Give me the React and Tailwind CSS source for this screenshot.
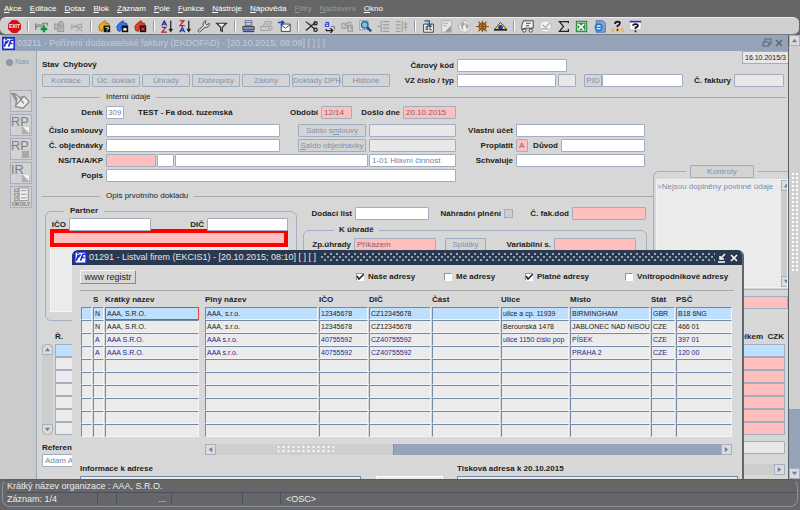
import clsx from 'clsx'
import { twMerge } from 'tailwind-merge'

const MENU = ['Akce', 'Editace', 'Dotaz', 'Blok', 'Záznam', 'Pole', 'Funkce', 'Nástroje', 'Nápověda', 'Filtry', 'Nastavení', 'Okno']

const TOOLS = [
  ['exit'],
  ['add', 'duplicate', 'remove'],
  ['queryEdit', 'queryRun', 'queryCancel'],
  ['sortAsc', 'sortDesc', 'wrench', 'filter'],
  ['print', 'printMail', 'mail'],
  ['cut', 'copy', 'paste', 'search', 'listIn', 'listOut'],
  ['attach', 'note', 'globe', 'helm', 'eye'],
  ['truck', 'clock', 'sum', 'excel', 'web', 'helpBoxes', 'help'],
]

const TABS = ['Kontace', 'Úč. doklad', 'Úhrady', 'Dobropisy', 'Zálohy', 'Doklady DPH', 'Historie']

const COLUMNS = ['', 'S', 'Krátký název', null, 'Plný název', 'IČO', 'DIČ', 'Část', 'Ulice', 'Místo', 'Stát', 'PSČ']

const FIRMS = [
  ['', 'N', 'AAA, S.R.O.', null, 'AAA, s.r.o.', '12345678', 'CZ12345678', '', 'ulice a cp. 11939', 'BIRMINGHAM', 'GBR', 'B18 6NG'],
  ['', 'N', 'AAA, S.R.O.', null, 'AAA, s.r.o.', '12345678', 'CZ12345678', '', 'Berounská 1478', 'JABLONEC NAD NISOU', 'CZE', '466 01'],
  ['', 'A', 'AAA S.R.O.', null, 'AAA s.r.o.', '40755592', 'CZ40755592', '', 'ulice 1150 číslo pop', 'PÍSEK', 'CZE', '397 01'],
  ['', 'A', 'AAA S.R.O.', null, 'AAA s.r.o.', '40755592', 'CZ40755592', '', '', 'PRAHA 2', 'CZE', '120 00'],
  ...Array.from({ length: 6 }, () => ['', '', '', null, '', '', '', '', '', '', '', '']),
]

const FILTERS = [
  { label: 'Naše adresy', checked: true, width: 'w-[88px]' },
  { label: 'Mé adresy', checked: false, width: 'w-[81px]' },
  { label: 'Platné adresy', checked: true, width: 'w-[100px]' },
  { label: 'Vnitropodnikové adresy', checked: false, width: 'w-[109px]' },
]

const glyphs = {
  exit: (
    <>
      <path d="M5 0h6l5 5v6l-5 5H5l-5-5V5z" fill="#d3101c" />
      <text x="8" y="10" fontSize="6" fontWeight="bold" textAnchor="middle" fill="#fff">EXIT</text>
    </>
  ),
  add: (
    <>
      <path d="M1 4v8M1 8h6l3-4h5v3" stroke="#6e7572" fill="none" strokeWidth="1.500" />
      <path d="M2 5h8l4-2-4 6H4z" fill="#9ba59f" />
      <path d="M11 7v8M7 11h8" stroke="#12943d" strokeWidth="3" />
    </>
  ),
  duplicate: <path d="M2 5h6V2h3l2 3v9H6v-3H2zM6 11V7h6M8 9h3M8 11h3" stroke="#9a9a9a" fill="#c0c0c0" strokeWidth="1.500" />,
  remove: <path d="M1 4v8M1 8l12-3v4H3M5 6l9 8M14 7l-8 7" stroke="#a6a6a6" fill="none" strokeWidth="1.500" />,
  queryEdit: (
    <>
      <path d="M1 8l2-3 5-4 2 1-1 2h4l1 3H8l-3 7-3-1z" fill="#f0ad1d" stroke="#8f6714" />
      <path d="M7 7h8v8H7z" fill="#111" />
      <path d="M9 9h4v2h-2v1M11 13v1" stroke="#fff" fill="none" />
    </>
  ),
  queryRun: (
    <>
      <path d="M1 8l2-3 5-4 2 1-1 2h4l1 3H8l-3 7-3-1z" fill="#2c7cf0" stroke="#16439b" />
      <path d="M7 7h8v8H7z" fill="#111" />
      <path d="M9 10h4v3H9z" fill="#fff" />
    </>
  ),
  queryCancel: (
    <>
      <path d="M1 8l2-3 5-4 2 1-1 2h4l1 3H8l-3 7-3-1z" fill="#e0402a" stroke="#8e1c15" />
      <path d="M7 7h8v8H7z" fill="#230b0b" />
      <path d="M9 9l4 4M13 9l-4 4" stroke="#f33" strokeWidth="1.500" />
    </>
  ),
  sortAsc: (
    <>
      <path d="M1 7l3-6 3 6M2 5h4" stroke="#23339c" fill="none" strokeWidth="1.500" />
      <path d="M1 9h5l-5 6h6" stroke="#b31f2a" fill="none" strokeWidth="1.500" />
      <path d="M12 1v13M10 11l2 3 2-3" stroke="#222" fill="none" strokeWidth="1.500" />
    </>
  ),
  sortDesc: (
    <>
      <path d="M1 1h5L1 7h6" stroke="#b31f2a" fill="none" strokeWidth="1.500" />
      <path d="M1 15l3-6 3 6M2 13h4" stroke="#23339c" fill="none" strokeWidth="1.500" />
      <path d="M12 1v13M10 11l2 3 2-3" stroke="#222" fill="none" strokeWidth="1.500" />
    </>
  ),
  wrench: <path d="M11 1a4 4 0 0 0-3 6L1 13l2 2 7-6a4 4 0 0 0 5-5l-3 2-2-2z" fill="#d9d9d9" stroke="#333" />,
  filter: <path d="M2 4h12l-5 5v5l-2-1V9z" fill="#eee" stroke="#333" strokeWidth="1.500" />,
  print: (
    <>
      <path d="M4 7V1h8v6z" fill="#fff" stroke="#445" />
      <path d="M1 8h14v4H1z" fill="#8d9299" stroke="#333" />
      <path d="M1 14h14" stroke="#2a3fc0" strokeWidth="2" />
      <path d="M5 3h6M5 5h6" stroke="#4457d0" />
    </>
  ),
  printMail: <path d="M1 8h10v5H1zM4 8l2-6h8l-2 6M7 5h4M12 7a3 3 0 1 1 0 6" fill="#c9c9c9" stroke="#999" />,
  mail: (
    <>
      <path d="M4 5h11v9H4z" fill="#fff" stroke="#222" />
      <path d="M4 6l5 4 6-4" stroke="#222" fill="none" />
      <path d="M0 3h7M4 1l3 2-3 3" stroke="#1b46bc" fill="none" strokeWidth="2" />
    </>
  ),
  cut: (
    <>
      <path d="M1 2l11 9M1 13L13 3" stroke="#222" strokeWidth="1.500" />
      <path d="M1 2l9 5" stroke="#4b8d80" />
      <circle cx="13" cy="4" r="2" fill="none" stroke="#222" strokeWidth="1.500" />
      <circle cx="13" cy="12" r="2" fill="none" stroke="#222" strokeWidth="1.500" />
    </>
  ),
  copy: (
    <>
      <path d="M2 1h7v8H2z" fill="#dfe4ff" />
      <path d="M3 3h4v5H3V5h4" stroke="#3245cf" fill="none" strokeWidth="1.500" />
      <path d="M4 11v2h7M9 10l3 3-3 3" stroke="#222" fill="none" strokeWidth="1.500" />
      <path d="M10 8h4v4" stroke="#667" fill="none" />
    </>
  ),
  paste: <path d="M1 4h7v6H1zM3 6h3v3M8 3h4v3M9 7h5v7H9zM11 9h2v3" fill="none" stroke="#a0a0a0" strokeWidth="1.500" />,
  search: (
    <>
      <path d="M1 1h10v11H1z" fill="#eef3f7" stroke="#78909c" />
      <path d="M10 9l5 5" stroke="#274d85" strokeWidth="3" />
      <circle cx="7" cy="6" r="4" fill="#73c4de" stroke="#29598a" strokeWidth="1.500" />
    </>
  ),
  listIn: <path d="M7 2h8M7 6h8M7 10h8M7 14h8M5 1v14M0 8h4" stroke="#a0a0a0" strokeWidth="1.500" />,
  listOut: <path d="M1 2h6M1 6h6M1 10h6M1 14h6M9 1v14M11 5h4M11 9h4M13 2v11" stroke="#a0a0a0" strokeWidth="1.500" />,
  attach: (
    <>
      <path d="M2 5h12v10H2z" fill="#f7f7f7" stroke="#222" />
      <path d="M5 8h2v4H5zM9 8h3M9 12h3M10 8v4" stroke="#222" fill="none" />
      <path d="M3 1h6v6M6 5l3 3 3-3" stroke="#245894" fill="none" strokeWidth="1.500" />
    </>
  ),
  note: (
    <>
      <path d="M2 1h12v14H2z" fill="#e7e7e7" stroke="#a8a8a8" />
      <path d="M4 4h6M4 7h4M13 8v6H7z" stroke="#999" fill="#999" />
    </>
  ),
  globe: (
    <>
      <circle cx="8" cy="8" r="7" fill="#f0f0f0" stroke="#aaa" />
      <path d="M3 4l4-2 2 3-3 3 1 5-3-3zM10 3l4 4-3 5-2-5z" fill="#aaa" />
    </>
  ),
  helm: (
    <>
      <circle cx="8" cy="8" r="4" fill="none" stroke="#8f5613" strokeWidth="2" />
      <path d="M8 1v14M0 8h16M3 2l10 12M13 2L3 14" stroke="#8f5613" strokeWidth="1.500" />
    </>
  ),
  eye: (
    <>
      <path d="M0 12L8 3l8 9z" fill="#f2d34a" stroke="#333" />
      <circle cx="8" cy="9" r="3" fill="#2138bd" />
      <path d="M0 12h16" stroke="#222" strokeWidth="2" />
    </>
  ),
  truck: (
    <>
      <path d="M3 1h12v9H5L1 12V7z" fill="#f4f4f4" stroke="#222" />
      <path d="M6 4h6M6 7h4" stroke="#222" />
      <circle cx="4" cy="13" r="2" fill="#fff" stroke="#222" />
      <circle cx="12" cy="13" r="2" fill="#fff" stroke="#222" />
    </>
  ),
  clock: (
    <>
      <circle cx="8" cy="8" r="7" fill="#f3f3f3" stroke="#b8b8b8" />
      <path d="M4 6l4 3 5-5M3 11h9" stroke="#a5a5a5" fill="none" strokeWidth="1.500" />
    </>
  ),
  sum: <path d="M14 4V2H3l5 6-5 6h11v-3" fill="none" stroke="#222" strokeWidth="1.500" />,
  excel: (
    <>
      <path d="M1 1h14v14H1z" fill="#2e8c43" />
      <path d="M3 3h10v10H3z" fill="none" stroke="#bfe0c6" />
      <path d="M4 5l7 7M11 5l-7 7" stroke="#fff" strokeWidth="2" />
    </>
  ),
  web: (
    <>
      <path d="M4 1h8l3 3v11H4z" fill="#8fa5d8" stroke="#3f5da8" />
      <circle cx="7" cy="9" r="4" fill="#d7ecff" stroke="#2277d5" strokeWidth="2" />
      <path d="M3 9h8" stroke="#2277d5" strokeWidth="1.500" />
    </>
  ),
  helpBoxes: (
    <>
      <path d="M0 10h4v5H0zM6 12h4v3H6zM12 10h4v5h-4z" fill="#efb765" />
      <path d="M5 5q0-3 3-3t3 2q0 2-3 3v2M8 11v2" stroke="#111" fill="none" strokeWidth="2" />
    </>
  ),
  help: (
    <>
      <path d="M1 2h14v10H1z" fill="#fff" stroke="#bbb" />
      <path d="M1 2h14" stroke="#4920c4" strokeWidth="2" />
      <path d="M5 7q0-2 3-2t3 2q0 2-3 2v2M8 13v2" stroke="#111" fill="none" strokeWidth="2" />
    </>
  ),
}

function Logo() {
  return (
    <svg viewBox="0 0 16 16" className="size-[13px] shrink-0" aria-hidden="true">
      <path d="M1 1h14v14H1z" fill="#fff" stroke="#1d2cd0" strokeWidth="2" />
      <path d="M5 5l-2 7M4 3h2M8 12l3-8h4M10 8h3M8 4l-3 4" stroke="#1d2cd0" strokeWidth="2" fill="none" />
    </svg>
  )
}

function Field({ id, className, value, tone = 'white' }) {
  return (
    <input
      id={id}
      aria-label={id ? undefined : 'Hodnota'}
      defaultValue={value}
      className={twMerge(
        'h-[13px] min-w-0 shrink-0 rounded-[1px] border border-[#a0aec0] px-[2px] text-[8px] outline-none',
        tone === 'white' && 'bg-white text-[#72849f]',
        tone === 'pink' && 'bg-[#ffbfbf] text-[#7e6470]',
        tone === 'gray' && 'bg-[#e8e8e8] text-[#72849f]',
        className
      )}
    />
  )
}

function Label({ htmlFor, className, children }) {
  return (
    <label htmlFor={htmlFor} className={clsx('shrink-0 text-right text-[8px] leading-[13px] font-bold whitespace-nowrap', className)}>
      {children}
    </label>
  )
}

function FlatButton({ className, children }) {
  return (
    <button
      type="button"
      className={clsx('h-[13px] shrink-0 rounded-[1px] border border-[#9dacc1] bg-[#d4d4d4] text-[8px] leading-[11px] whitespace-nowrap text-[#8292ac]', className)}
    >
      {children}
    </button>
  )
}

function Heading({ className, children }) {
  return (
    <div className={clsx('flex h-3 items-center gap-[6px]', className)}>
      <span className="h-px w-[58px] bg-[#a9a9a9]" />
      <h2 className="text-[8px] whitespace-nowrap">{children}</h2>
      <span className="h-px flex-1 bg-[#a9a9a9]" />
    </div>
  )
}

function Arrow({ dir, className }) {
  const d = { up: 'M1 6l3-4 3 4z', down: 'M1 2l3 4 3-4z', left: 'M6 1L2 4l4 3z', right: 'M2 1l4 3-4 3z' }[dir]
  return (
    <button type="button" aria-label={dir} className={clsx('flex size-[11px] shrink-0 items-center justify-center border border-[#a3b0c2] bg-[#dcdcdc]', className)}>
      <svg viewBox="0 0 8 8" className="size-[7px]" fill="#6c7f9d"><path d={d} /></svg>
    </button>
  )
}

function TopBars() {
  return (
    <header>
      <nav className="flex h-[17px] items-center gap-2 pl-1 text-[8px] text-white">
        {MENU.map((item) => (
          <a key={item} href="#" className={clsx('whitespace-nowrap', (item === 'Filtry' || item === 'Nastavení') && 'text-[#9a9a9a]')}>
            <span className="underline">{item[0]}</span>
            {item.slice(1)}
          </a>
        ))}
      </nav>
      <div className="mr-px flex h-[18px] items-center rounded-md border-y border-[#ececec] border-b-[#737d80] bg-[#cfcfcf] pl-[5px]">
        {TOOLS.map((group, i) => (
          <div key={group[0]} className="flex items-center">
            {i > 0 && (
              <span className="flex w-[9px] justify-center">
                <span className="h-[10px] w-[2px] border-l border-[#8795ab] bg-white" />
              </span>
            )}
            {group.map((name) => (
              <button key={name} type="button" aria-label={name} className="flex w-[18px] justify-center">
                <svg viewBox="0 0 16 16" className="size-[13px]">{glyphs[name]}</svg>
              </button>
            ))}
          </div>
        ))}
      </div>
    </header>
  )
}

function Tile({ children }) {
  return (
    <button type="button" aria-label="Panel" className="size-[22px] border border-[#a5b1c2] bg-[#d2d2d2]">
      <svg viewBox="0 0 22 22" className="size-[20px]" fontFamily="Liberation Sans, sans-serif">{children}</svg>
    </button>
  )
}

function Sidebar() {
  return (
    <aside className="flex w-[35px] shrink-0 flex-col gap-[2px] border-r border-[#9aa8bc] bg-[#cbcbcb] pt-[6px] pl-[8px]">
      <label className="-ml-1 mb-[21px] flex h-[10px] items-center gap-[2px] text-[8px] text-[#8393b0]">
        <input type="radio" className="size-[7px] appearance-none rounded-full border border-[#75879f] bg-[#8d9cb4]" />
        Nav
      </label>
      <Tile>
        <path d="M1 3l5 1 3 3 6-1 5 6-7 7-8-2 1-6zM3 2l4 8M9 7l5 7M14 6l-8 9" fill="#ededed" stroke="#8c8c8c" strokeWidth="1.500" />
      </Tile>
      <Tile>
        <text x="0" y="12" fontSize="14" fill="#808080">RP</text>
        <path d="M12 13h9v8h-9z" fill="#b0b0b0" />
        <path d="M13 13l7 7v-7z" fill="#f4f4f4" />
      </Tile>
      <Tile>
        <text x="0" y="12" fontSize="14" fill="#808080">RP</text>
        <path d="M12 13h8v8h-8z" fill="#a9a9a9" />
      </Tile>
      <Tile>
        <text x="0" y="12" fontSize="14" fill="#808080">IR</text>
        <path d="M12 13h9v8h-9z" fill="#b0b0b0" />
        <path d="M13 13l7 7v-7z" fill="#f4f4f4" />
      </Tile>
      <Tile>
        <path d="M9 1h10v14H9z" fill="#efefef" stroke="#8c8c8c" />
        <path d="M4 2h4v3H4zM4 7h4v3H4zM4 12h4v3H4zM11 4h6M11 8h6M11 12h6" fill="none" stroke="#8c8c8c" />
        <text x="1" y="21" fontSize="6" fontWeight="bold" fill="#777">ÚKOLY</text>
      </Tile>
    </aside>
  )
}

function PartnerPanels() {
  return (
    <div className="mt-[3px] flex items-start gap-[6px] pl-[3px]">
      <fieldset className="w-[251px] shrink-0 rounded-md border border-[#a3b0c2] pr-2 pb-2 pl-1">
        <legend className="ml-[14px] h-3 px-[6px] text-[8px] leading-3 font-bold">Partner</legend>
        <div className="flex items-center gap-[3px] pt-px">
          <Label htmlFor="ico" className="w-[16px]">IČO</Label>
          <Field id="ico" className="w-[82px]" />
          <Label htmlFor="dic" className="w-[50px]">DIČ</Label>
          <Field id="dic" className="w-[81px]" />
        </div>
        <input aria-label="Název partnera" className="-mt-[2px] block h-[18px] w-full border-4 border-[#ff0000] bg-[#ffbfbf] outline-none" />
        <div className="h-[65px] border border-[#f5f5f5] bg-[#ebebeb]" />
      </fieldset>
      <div className="flex-1 pt-[2px] pr-[6px]">
        <div className="flex items-center gap-[3px]">
          <Label htmlFor="dodaci" className="w-[49px]">Dodací list</Label>
          <Field id="dodaci" className="w-[74px]" />
          <Label htmlFor="nahradni" className="w-[69px]">Náhradní plnění</Label>
          <input id="nahradni" type="checkbox" className="size-[9px] shrink-0 appearance-none border border-[#a0aec0] bg-[#cdcdcd]" />
          <Label htmlFor="fakdod" className="w-[53px]">Č. fak.dod</Label>
          <Field id="fakdod" tone="pink" className="w-[74px]" />
        </div>
        <fieldset className="mt-1 h-[98px] rounded-md border border-[#a3b0c2]">
          <legend className="ml-[30px] h-3 px-[5px] text-[8px] leading-3 font-bold">K úhradě</legend>
          <div className="flex items-center gap-[3px] pt-[2px]">
            <Label htmlFor="zpuhrady" className="w-[47px]">Zp.úhrady</Label>
            <Field id="zpuhrady" tone="pink" value="Příkazem" className="w-[82px]" />
            <FlatButton className="ml-[6px] w-[41px]">Splátky</FlatButton>
            <Label htmlFor="variabilni" className="w-[62px]">Variabilní s.</Label>
            <Field id="variabilni" tone="pink" className="w-[82px]" />
          </div>
        </fieldset>
      </div>
    </div>
  )
}

function InvoiceForm() {
  return (
    <main className="min-w-0 flex-1 bg-[#d7d7d7] pl-[5px]">
      <div className="grid grid-cols-[346px_63px_1fr] gap-x-[3px]">
        <div className="flex h-[23px] items-center gap-1 pt-[5px] text-[8px] font-bold">
          <span>Stav</span>
          <span>Chybový</span>
        </div>
        <Label htmlFor="kod" className="pt-[8px]">Čárový kód</Label>
        <div className="flex justify-between">
          <Field id="kod" className="mt-[8px] w-[110px]" />
          <Field value="16.10.2015/3" className="w-[46px] rounded-none border-r-0 bg-[#e6e6e6] text-[7px] text-[#222]" />
        </div>
        <div className="flex gap-[2px]">
          {TABS.map((t) => <FlatButton key={t} className="w-[48px]">{t}</FlatButton>)}
        </div>
        <Label htmlFor="vz">VZ číslo / typ</Label>
        <div className="flex items-center pr-1">
          <Field id="vz" className="w-[99px]" />
          <Field tone="gray" className="ml-[2px] w-[18px]" />
          <FlatButton className="ml-2 w-[18px]">PID</FlatButton>
          <Field className="w-[81px]" />
          <Label htmlFor="faktura" className="mr-[3px] ml-auto">Č. faktury</Label>
          <Field id="faktura" tone="gray" className="w-[50px]" />
        </div>
      </div>
      <Heading className="mt-1 mr-[2px]">Interní údaje</Heading>

      <div className="flex">
        <div className="min-w-0 flex-1">
          <div className="mt-[3px] flex items-center gap-[3px]">
            <Label htmlFor="denik" className="w-[61px]">Deník</Label>
            <Field id="denik" value="309" className="w-[18px] px-px" />
            <strong className="w-[155px] pl-[11px] text-[8px]">TEST - Fa dod. tuzemská</strong>
            <Label htmlFor="obdobi" className="w-[33px]">Období</Label>
            <Field id="obdobi" tone="pink" value="12/14" className="w-[31px]" />
            <Label htmlFor="doslo" className="w-[45px]">Došlo dne</Label>
            <Field id="doslo" tone="pink" value="20.10.2015" className="w-[53px]" />
          </div>

          <div className="mt-[5px] flex gap-[3px]">
            <div className="flex flex-col gap-[2px]">
              <div className="flex items-center gap-[3px]">
                <Label htmlFor="smlouva" className="w-[61px]">Číslo smlouvy</Label>
                <Field id="smlouva" className="w-[174px]" />
                <FlatButton className="ml-[15px] w-[68px]">Saldo s<u>m</u>louvy</FlatButton>
                <Field tone="gray" className="w-[87px]" />
              </div>
              <div className="flex items-center gap-[3px]">
                <Label htmlFor="objednavka" className="w-[61px]">Č. objednávky</Label>
                <Field id="objednavka" className="w-[174px]" />
                <FlatButton className="ml-[15px] w-[68px]"><u>S</u>aldo objednávky</FlatButton>
                <Field tone="gray" className="w-[87px]" />
              </div>
              <div className="flex items-center gap-px">
                <Label htmlFor="ns" className="mr-[2px] w-[61px]">NS/TA/A/KP</Label>
                <Field id="ns" tone="pink" className="w-[50px]" />
                <Field className="w-[17px]" />
                <Field className="w-[193px]" />
                <Field value="1-01 Hlavní činnost" className="w-[87px]" />
              </div>
              <div className="flex items-center gap-[3px]">
                <Label htmlFor="popis" className="w-[61px]">Popis</Label>
                <Field id="popis" className="w-[350px]" />
              </div>
            </div>
            <div className="flex flex-col gap-[2px]">
              <div className="flex items-center gap-[3px]">
                <Label htmlFor="ucet" className="w-[54px]">Vlastní účet</Label>
                <Field id="ucet" className="w-[129px]" />
              </div>
              <div className="flex items-center gap-[3px]">
                <Label htmlFor="proplatit" className="w-[54px]">Proplatit</Label>
                <Field id="proplatit" tone="pink" value="A" className="w-[12px]" />
                <Label htmlFor="duvod" className="w-[27px]">Důvod</Label>
                <Field id="duvod" className="w-[84px]" />
              </div>
              <div className="flex items-center gap-[3px]">
                <Label htmlFor="schvaluje" className="w-[54px]">Schvaluje</Label>
                <Field id="schvaluje" className="w-[129px]" />
              </div>
            </div>
          </div>
          <Heading className="mt-2">Opis prvotního dokladu</Heading>
          <PartnerPanels />
        </div>

        <div className="w-[135px] shrink-0 overflow-hidden pt-[62px]">
          <fieldset className="rounded-tl-md border border-r-0 border-[#a3b0c2] pt-px pb-px pl-[2px]">
            <legend className="ml-[30px] px-1">
              <FlatButton className="block w-[64px]">Kontroly</FlatButton>
            </legend>
            <div className="flex h-[109px] border border-[#f1f1f1] bg-[#ebebeb] text-[8px] text-[#7c8ca8]">
              <p className="flex-1 pt-[3px] whitespace-nowrap">&gt;Nejsou doplněny povinné údaje</p>
              <div className="flex w-[6px] flex-col justify-between overflow-hidden bg-[#cbcbcb]">
                <Arrow dir="up" />
                <Arrow dir="down" />
              </div>
            </div>
          </fieldset>
          <div className="mt-[6px] h-[13px] border border-[#a0aec0] bg-[#ffbfbf]" />
        </div>
      </div>

      <div className="mt-2 flex justify-between pr-1 pl-[13px] text-[8px] leading-[14px] font-bold">
        <span>Ř.</span>
        <span>Celkem&nbsp;&nbsp;CZK</span>
      </div>
      <div className="flex gap-[2px] pr-[3px]">
        <div className="flex w-[11px] flex-col justify-between bg-[#cdcdcd]">
          <Arrow dir="up" className="rounded-t-md" />
          <Arrow dir="down" className="rounded-b-md" />
        </div>
        <table className="flex-1 border-separate border-spacing-0">
          <tbody>
            {Array.from({ length: 7 }, (_, i) => (
              <tr key={i} className="h-[13px]">
                <td className={clsx('w-[60px] border border-[#a0aec0]', i === 0 ? 'bg-[#bfdfff]' : 'bg-[#ebebeb]')} />
                <td className="border border-[#a0aec0] bg-[#ebebeb]" />
                <td className={clsx('w-[90px] border border-[#a0aec0]', i === 0 ? 'bg-[#bfdfff]' : 'bg-[#ffbfbf]')} />
              </tr>
            ))}
          </tbody>
        </table>
      </div>
      <div className="mt-[6px] flex items-center justify-between pr-[3px]">
        <Label htmlFor="referent">Referent</Label>
        <Field tone="gray" className="w-[90px]" />
      </div>
      <div className="flex justify-between pr-[3px]">
        <Field id="referent" value="Adam A" className="w-[80px]" />
        <div className="mt-[10px] flex h-[11px] w-[300px] justify-end bg-[#cdcdcd]">
          <Arrow dir="right" />
        </div>
      </div>
    </main>
  )
}

function FirmTable() {
  return (
    <table className="mt-px w-full table-fixed border-separate border-spacing-x-px border-spacing-y-0">
      <colgroup>
        <col className="w-[11px]" />
        <col className="w-[11px]" />
        <col className="w-[94px]" />
        <col className="w-[4px]" />
        <col className="w-[113px]" />
        <col className="w-[49px]" />
        <col className="w-[62px]" />
        <col className="w-[68px]" />
        <col className="w-[68px]" />
        <col className="w-[80px]" />
        <col className="w-[24px]" />
        <col />
      </colgroup>
      <thead className="text-[8px] leading-[10px]">
        <tr className="h-[15px]">
          {COLUMNS.map((c, i) => (
            <th key={i} className="p-0 text-left font-bold whitespace-nowrap">{c}</th>
          ))}
        </tr>
      </thead>
      <tbody className="text-[7px] leading-[10px]">
        {FIRMS.map((row, r) => (
          <tr key={r} className={clsx('h-[13px]', r < 2 ? 'text-[#222]' : 'text-[#1f1f8f]')}>
            {row.map((cell, c) =>
              cell === null ? (
                <td key={c} />
              ) : (
                <td
                  key={c}
                  className={clsx(
                    'border py-0 pr-0 pl-px whitespace-nowrap',
                    r === 0 ? 'bg-[#bfdfff]' : 'bg-[#ebebeb]',
                    r === 0 && c === 2 ? 'border-[#e8413c]' : 'border-t-[#7389a6] border-r-[#f4f4f4] border-b-[#f4f4f4] border-l-[#7389a6]'
                  )}
                >
                  {cell}
                </td>
              )
            )}
          </tr>
        ))}
      </tbody>
    </table>
  )
}

function FirmDialog() {
  return (
    <section role="dialog" aria-label="Listval firem" className="absolute top-[215px] right-[56px] bottom-0 left-[72px] overflow-hidden rounded-t-md border-r-2 border-[#5f666c] bg-[#d8d8d8]">
      <header className="flex h-[15px] items-center gap-[2px] bg-[#2b3950] pr-[3px] pl-[2px] text-[#e6e6e6]">
        <Logo />
        <h1 className="text-[9px] whitespace-nowrap">01291 - Listval firem (EKCIS1) - [20.10.2015; 08:10] [ ] [ ]</h1>
        <span className="ml-[3px] h-[9px] flex-1 bg-[radial-gradient(circle_at_1px_4px,#9aa6b8_1px,transparent_1px),radial-gradient(circle_at_4px_1px,#9aa6b8_1px,transparent_1px)] bg-[size:6px_6px]" />
        <button type="button" aria-label="Minimalizovat">
          <svg viewBox="0 0 10 10" className="size-[10px]" fill="none" stroke="#fff"><path d="M8 1L4 5M3 3v3h4M1 9h7" strokeWidth="1.500" /></svg>
        </button>
        <button type="button" aria-label="Zavřít">
          <svg viewBox="0 0 10 10" className="size-[10px]" stroke="#fff"><path d="M2 2l6 6M8 2l-6 6" strokeWidth="1.500" /></svg>
        </button>
      </header>
      <div className="px-2">
        <div className="flex items-center justify-between border-b border-[#aaa] pt-[5px] pb-[6px]">
          <button type="button" className="h-[14px] w-[56px] border border-[#f5f5f5] border-r-[#7d8ba0] border-b-[#7d8ba0] text-[9px] leading-[12px]">www registr</button>
          <div className="flex">
            {FILTERS.map((f) => (
              <label key={f.label} className={clsx('relative flex items-center gap-1 text-[8px] font-bold whitespace-nowrap', f.width)}>
                <input type="checkbox" defaultChecked={f.checked} className="peer size-[8px] shrink-0 appearance-none border border-[#8795a8] border-r-white border-b-white bg-white" />
                <svg viewBox="0 0 8 8" className="absolute left-0 hidden size-[8px] peer-checked:block" fill="none" stroke="#222" strokeWidth="1.500"><path d="M1 3l2 3 5-5" /></svg>
                {f.label}
              </label>
            ))}
          </div>
        </div>
        <div className="pr-px">
          <FirmTable />
          <div className="mt-[7px] mr-px ml-[125px] flex h-[11px] bg-[#95a4ba]">
            <Arrow dir="left" />
            <div className="flex w-[178px] justify-center border-r border-[#7d8fa9] bg-[#cfcfcf] py-px">
              <span className="w-[58px] bg-[radial-gradient(circle,#fff_25%,transparent_40%)] bg-[size:5px_4px]" />
            </div>
            <Arrow dir="right" className="ml-auto" />
          </div>
        </div>
        <div className="mt-[7px] grid grid-cols-[377px_1fr] text-[8px] leading-[14px] font-bold">
          <div>
            <label htmlFor="adresa">Informace k adrese</label>
            <div className="flex gap-[15px]">
              <select id="adresa" className="h-[13px] w-[281px] border border-[#7389a6] bg-[#ebebeb]" />
              <input aria-label="Kód adresy" className="h-[13px] w-[67px] border border-white bg-[#ebebeb]" />
            </div>
          </div>
          <div>
            <label htmlFor="tisk">Tisková adresa k 20.10.2015</label>
            <select id="tisk" className="block h-[13px] w-[281px] border border-[#7389a6] bg-[#ebebeb]" />
          </div>
        </div>
      </div>
    </section>
  )
}

function StatusBar() {
  return (
    <footer className="h-[31px] shrink-0 px-[2px] pb-[3px] text-[9px] text-[#ececec]">
      <div className="h-full rounded-lg border border-[#8593a5] border-t-[#555c66] pl-1">
        <p className="h-[13px] border-b border-[#48525f] leading-[13px]">Krátký název organizace : AAA, S.R.O.</p>
        <div className="flex h-[12px] leading-[12px]">
          <span className="w-[91px] border-r border-[#48525f]">Záznam: 1/4</span>
          <span className="w-[19px] border-r border-[#48525f]" />
          <span className="w-[55px] border-r border-[#48525f] pr-[5px] text-right">...</span>
          <span className="w-[71px] border-r border-[#48525f]" />
          <span className="w-[38px] border-r border-[#48525f]" />
          <span className="pl-[5px]">&lt;OSC&gt;</span>
        </div>
      </div>
    </footer>
  )
}

export default function App() {
  return (
    <div className="flex h-screen flex-col overflow-hidden bg-[#666] font-['Liberation_Sans',Arial,sans-serif] leading-none text-[#222]">
      <TopBars />
      <div className="relative flex min-h-0 flex-1 overflow-hidden bg-[#cbcbcb]">
        <div className="ml-[2px] flex min-w-0 flex-1 flex-col border-r border-[#5b5f66]">
          <header className="flex h-[16px] shrink-0 items-center gap-[2px] bg-[#95a3b9] pr-1 text-[#c6cbd3]">
            <Logo />
            <h1 className="flex-1 text-[9px] whitespace-nowrap">03211 - Pořízení dodavatelské faktury (EKDOFAD) - [20.10.2015; 08:09] [ ] [ ]</h1>
            <button type="button" aria-label="Obnovit">
              <svg viewBox="0 0 10 10" className="size-[10px]" fill="none" stroke="#5b6370"><path d="M3 1h6v5H7M3 1v3M1 4h6v4H1z" /></svg>
            </button>
            <button type="button" aria-label="Zavřít okno">
              <svg viewBox="0 0 10 10" className="size-[10px]" stroke="#5b6370"><path d="M2 2l6 6M8 2l-6 6" strokeWidth="1.500" /></svg>
            </button>
          </header>
          <div className="flex min-h-0 flex-1 overflow-hidden">
            <Sidebar />
            <InvoiceForm />
          </div>
        </div>
        <div className="flex w-[11px] shrink-0 flex-col bg-[#95a3b9]">
          <Arrow dir="up" />
          <div className="flex flex-[6] flex-col items-center justify-center bg-[#d0d0d0] pb-3">
            <span className="h-[100px] w-[7px] bg-[radial-gradient(circle,#fff_25%,transparent_40%)] bg-[size:4px_4px]" />
          </div>
          <div className="flex-1" />
          <Arrow dir="down" />
        </div>
        <FirmDialog />
      </div>
      <StatusBar />
    </div>
  )
}
